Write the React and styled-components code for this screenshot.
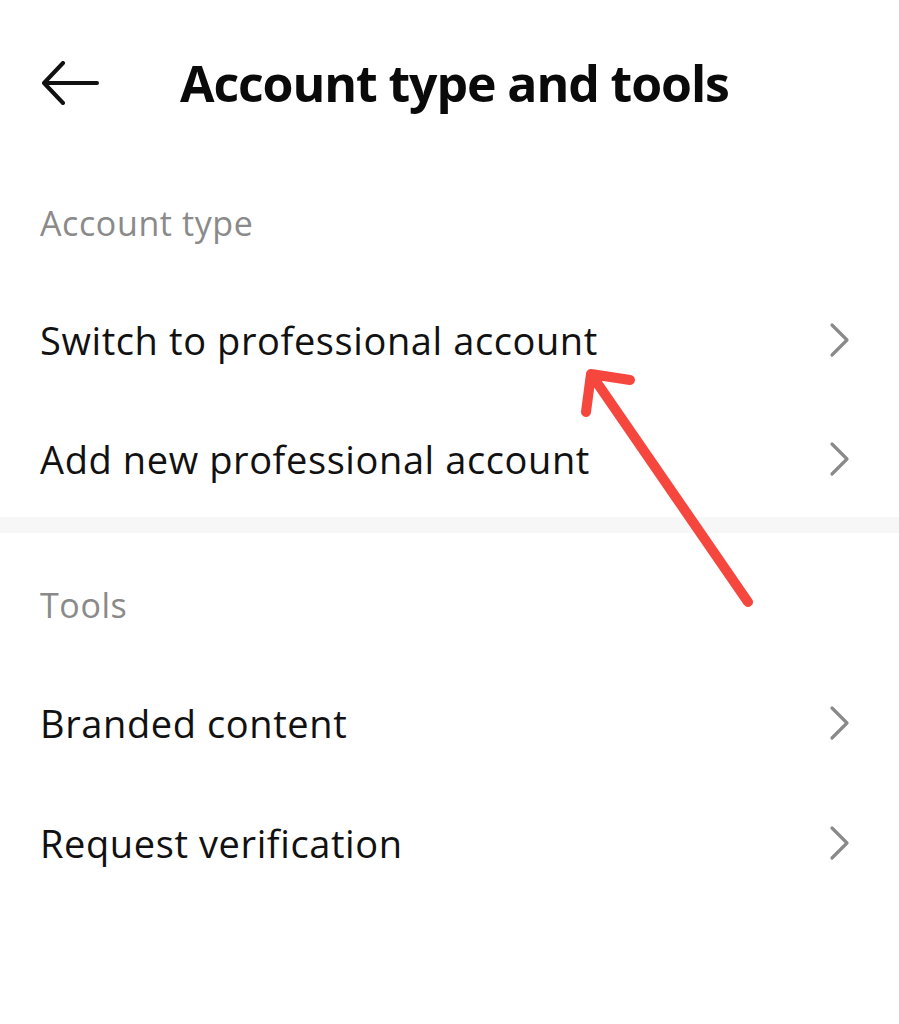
import styled, { createGlobalStyle } from "styled-components";

const Global = createGlobalStyle`
  html, body {
    margin: 0;
    padding: 0;
    background: #fff;
  }
  body {
    font-family: "Open Sans", "Noto Sans", sans-serif;
    color: #111;
  }
`;

const Screen = styled.div`
  position: relative;
  width: 899px;
  height: 1024px;
  background: #fff;
  overflow: hidden;
`;

const Header = styled.header`
  display: flex;
  align-items: center;
  height: 165px;
  padding-left: 40px;
`;

const BackButton = styled.button`
  display: flex;
  align-items: center;
  justify-content: center;
  width: 60px;
  height: 60px;
  padding: 0;
  border: none;
  background: none;
  color: #111;
`;

const Title = styled.h1`
  margin: 0 0 0 80px;
  font-size: 50px;
  font-weight: 700;
  letter-spacing: -1.1px;
  color: #0a0a0a;
`;

const Section = styled.section`
  display: flex;
  flex-direction: column;
`;

const SectionLabel = styled.div`
  display: flex;
  align-items: center;
  height: ${(p) => p.$height}px;
  padding: ${(p) => p.$top}px 40px 0;
  box-sizing: border-box;
  font-size: 34px;
  letter-spacing: 0.6px;
  color: #8a8a8a;
`;

const Row = styled.div`
  display: flex;
  align-items: center;
  justify-content: space-between;
  height: ${(p) => p.$height || 120}px;
  padding: 0 48px 0 40px;
  box-sizing: border-box;
  font-size: 38px;
  letter-spacing: 0.6px;
  color: #111;
`;

const Divider = styled.div`
  height: 16px;
  background: #f7f7f7;
`;

const Overlay = styled.svg`
  position: absolute;
  left: 0;
  top: 0;
  pointer-events: none;
`;

const Chevron = () => (
  <svg width="22" height="36" viewBox="0 0 22 36" fill="none">
    <path
      d="M3 3 L18 18 L3 33"
      stroke="#8a8a8a"
      strokeWidth="3.2"
      strokeLinecap="round"
      strokeLinejoin="round"
    />
  </svg>
);

const BackArrow = () => (
  <svg width="58" height="44" viewBox="0 0 58 44" fill="none">
    <path
      d="M56 22 H4 M22 2 L3 22 L22 42"
      stroke="#111"
      strokeWidth="4"
      strokeLinecap="round"
      strokeLinejoin="round"
    />
  </svg>
);

const App = () => {
  return (
    <>
      <Global />
      <Screen>
        <Header>
          <BackButton>
            <BackArrow />
          </BackButton>
          <Title>Account type and tools</Title>
        </Header>
        <Section>
          <SectionLabel $height={115} $top={0}>
            Account type
          </SectionLabel>
          <Row>
            Switch to professional account
            <Chevron />
          </Row>
          <Row $height={117}>
            Add new professional account
            <Chevron />
          </Row>
        </Section>
        <Divider />
        <Section>
          <SectionLabel $height={130} $top={14}>
            Tools
          </SectionLabel>
          <Row>
            Branded content
            <Chevron />
          </Row>
          <Row>
            Request verification
            <Chevron />
          </Row>
        </Section>
        <Overlay width="899" height="1024" viewBox="0 0 899 1024">
          <path
            d="M748 602 L591 374 M586 412 L591 374 L630 380"
            stroke="#f5473d"
            strokeWidth="10"
            strokeLinecap="round"
            strokeLinejoin="round"
            fill="none"
          />
        </Overlay>
      </Screen>
    </>
  );
};

export default App;
